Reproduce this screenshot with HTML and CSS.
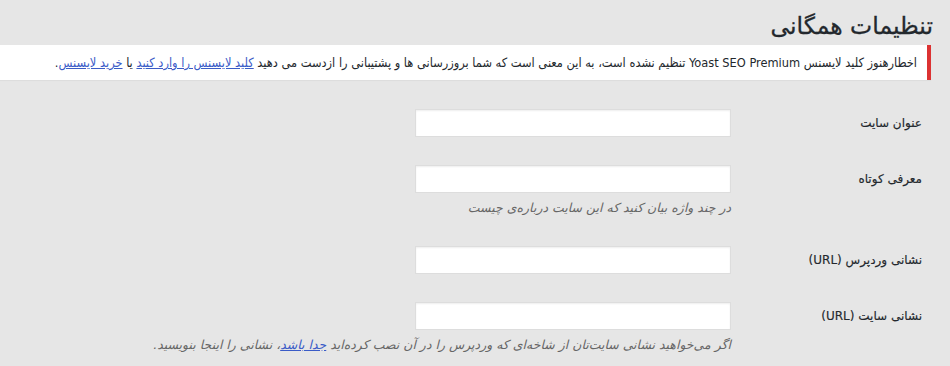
FILE: index.html
```html
<!DOCTYPE html>
<html lang="fa" dir="rtl">
<head>
<meta charset="utf-8">
<title>تنظیمات همگانی</title>
<link rel="stylesheet" href="styles.css">
</head>
<body>
<div class="wrap">
  <h1 class="page-title">تنظیمات همگانی</h1>
  <div class="notice notice-error">
    <p>اخطارهنوز کلید لایسنس Yoast SEO Premium تنظیم نشده است، به این معنی است که شما بروزرسانی ها و پشتیبانی را ازدست می دهید <a href="#">کلید لایسنس را وارد کنید</a> یا <a href="#">خرید لایسنس</a>.</p>
  </div>
  <div class="form-table">
    <div class="form-row">
      <label class="form-label">عنوان سایت</label>
      <div class="form-field"><input class="regular-text" type="text"></div>
    </div>
    <div class="form-row">
      <label class="form-label">معرفی کوتاه</label>
      <div class="form-field">
        <input class="regular-text" type="text">
        <p class="description">در چند واژه بیان کنید که این سایت درباره‌ی چیست</p>
      </div>
    </div>
    <div class="form-row">
      <label class="form-label">نشانی وردپرس (URL)</label>
      <div class="form-field"><input class="regular-text" type="text"></div>
    </div>
    <div class="form-row">
      <label class="form-label">نشانی سایت (URL)</label>
      <div class="form-field">
        <input class="regular-text" type="text">
        <p class="description">اگر می‌خواهید نشانی سایت‌تان از شاخه‌ای که وردپرس را در آن نصب کرده‌اید <a href="#">جدا باشد</a>، نشانی را اینجا بنویسید.</p>
      </div>
    </div>
  </div>
</div>
</body>
</html>
```

FILE: styles.css
```css
html, body {
  margin: 0;
  padding: 0;
  background: #e6e6e6;
}
body {
  font-family: "DejaVu Sans", "Noto Sans", sans-serif;
  font-size: 12px;
  color: #23282d;
  direction: rtl;
}
.wrap {
  margin: 0 19px 0 0;
}
.page-title {
  margin: 0 -2px 0 0;
  padding: 8px 0 0 0;
  font-size: 23.5px;
  font-weight: 400;
  line-height: 37px;
  color: #23282d;
  -webkit-text-stroke: 0.3px #23282d;
}
.notice {
  background: #fff;
  border-right: 4px solid #dc3232;
  box-shadow: 0 1px 1px rgba(0,0,0,.04);
  margin-top: 0;
  padding: 0 10px;
}
.notice p {
  margin: 0;
  padding: 8px 0;
  line-height: 19px;
  font-family: "DejaVu Sans Condensed", "DejaVu Sans", sans-serif;
  font-size: 12.7px;
}
a {
  color: #3a5bc7;
  text-decoration: underline;
}
.form-table {
  padding-top: 15px;
}
.form-row {
  display: grid;
  grid-template-columns: 200px 1fr;
  padding: 14px 0 14px 0;
}
.form-label {
  padding-right: 9px;
  line-height: 28px;
  font-size: 12px;
  color: #23282d;
  -webkit-text-stroke: 0.15px #23282d;
}
.form-field {
  display: flex;
  flex-direction: column;
  align-items: flex-start;
}
.regular-text {
  box-sizing: border-box;
  width: 316px;
  height: 28px;
  margin: 0;
  border: 1px solid #ddd;
  box-shadow: inset 0 1px 2px rgba(0,0,0,.07);
  background: #fff;
  font-family: inherit;
}
.description {
  margin: 5px 0 0 0;
  font-style: italic;
  color: #666;
  font-size: 12.5px;
  line-height: 20px;
}
```
